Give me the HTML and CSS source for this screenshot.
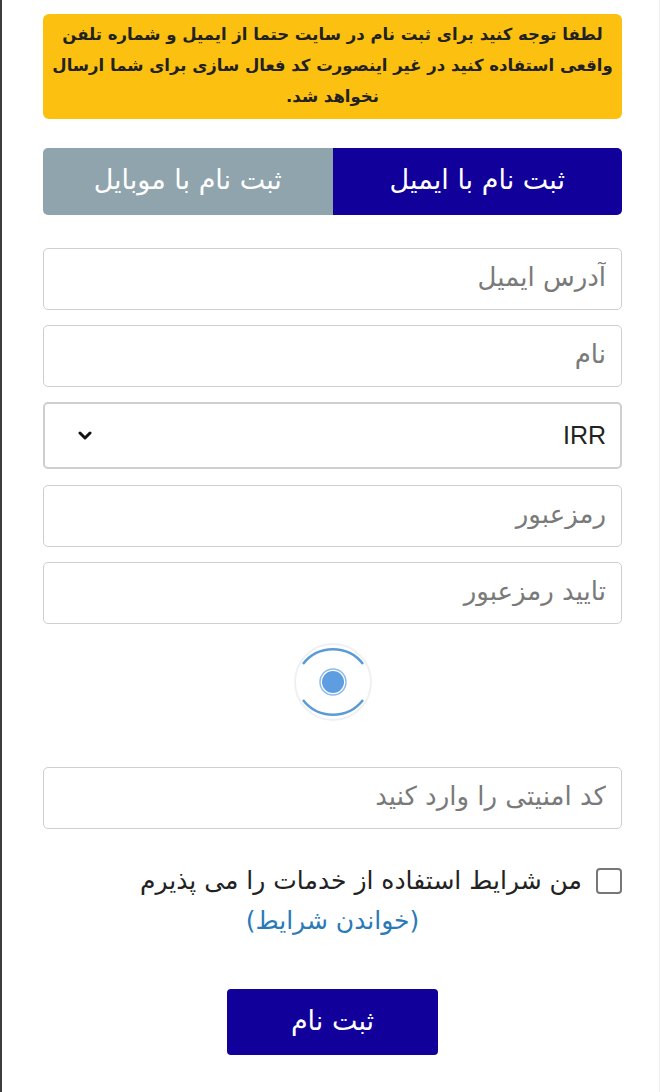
FILE: index.html
```
<!DOCTYPE html>
<html lang="fa" dir="rtl">
<head>
    <meta charset="UTF-8">
    <meta name="viewport" content="width=device-width, initial-scale=1.0">
    <title>ثبت نام</title>
    <link rel="stylesheet" href="styles.css">
</head>
<body>
    <div class="page">
        <div class="notice">
            <span>لطفا توجه کنید برای ثبت نام در سایت حتما از ایمیل و شماره تلفن</span><br>
            <span>واقعی استفاده کنید در غیر اینصورت کد فعال سازی برای شما ارسال</span><br>
            <span>نخواهد شد.</span>
        </div>

        <div class="tabs">
            <div class="tab active">ثبت نام با ایمیل</div>
            <div class="tab">ثبت نام با موبایل</div>
        </div>

        <form class="form">
            <input class="field" type="email" placeholder="آدرس ایمیل">
            <input class="field" type="text" placeholder="نام">
            <div class="field select">
                <span>IRR</span>
                <svg width="14" height="10" viewBox="0 0 14 10">
                    <path d="M2 2 L7 7 L12 2" fill="none" stroke="#111" stroke-width="3" stroke-linecap="round" stroke-linejoin="round"/>
                </svg>
            </div>
            <input class="field" type="password" placeholder="رمزعبور">
            <input class="field" type="password" placeholder="تایید رمزعبور">

            <div class="captcha">
                <svg width="84" height="84" viewBox="0 0 84 84">
                    <circle cx="42" cy="42" r="38" fill="none" stroke="#eef1f4" stroke-width="2"/>
                    <path d="M12 24 A38 38 0 0 1 72 24" fill="none" stroke="#5b9bd5" stroke-width="2.5"/>
                    <path d="M72 60 A38 38 0 0 1 12 60" fill="none" stroke="#5b9bd5" stroke-width="2.5"/>
                    <circle cx="42" cy="42" r="13" fill="none" stroke="#8fbbe8" stroke-width="1.5"/>
                    <circle cx="42" cy="42" r="11" fill="#5e9de0"/>
                </svg>
            </div>

            <input class="field" type="text" placeholder="کد امنیتی را وارد کنید">

            <div class="terms">
                <label class="check">
                    <span class="box"></span>
                    <span>من شرایط استفاده از خدمات را می پذیرم</span>
                </label>
                <a class="terms-link" href="#">(خواندن شرایط)</a>
            </div>

            <button type="button" class="submit">ثبت نام</button>
        </form>
    </div>
</body>
</html>
```

FILE: styles.css
```
body {
    margin: 0;
    background-color: #fff;
    font-family: "DejaVu Sans", "Noto Sans", sans-serif;
}

.page {
    min-height: 1092px;
    box-sizing: border-box;
    border-left: 2px solid #3d3d3d;
    border-right: 1px solid #f0f0f0;
    padding: 14px 37px 0 41px;
}

.notice {
    background-color: #fcc010;
    color: #222;
    font-weight: bold;
    font-size: 16.5px;
    line-height: 31px;
    text-align: center;
    white-space: nowrap;
    padding: 5px 4px 7px;
    border-radius: 6px;
}

.tabs {
    display: flex;
    margin-top: 29px;
    height: 67px;
    border-radius: 5px;
    overflow: hidden;
}

.tab {
    flex: 1;
    display: flex;
    align-items: center;
    justify-content: center;
    padding-bottom: 4px;
    background-color: #90a4ae;
    color: #fff;
    font-size: 27px;
}

.tab.active {
    background-color: #110099;
}

.form {
    display: flex;
    flex-direction: column;
    margin-top: 33px;
}

.field {
    box-sizing: border-box;
    height: 62px;
    margin-bottom: 15px;
    border: 1px solid #cfcfcf;
    border-radius: 5px;
    padding: 0 15px 4px;
    font-family: inherit;
    font-size: 26px;
    color: #222;
    background: #fff;
    direction: rtl;
}

.field::placeholder {
    color: #7a7a7a;
}

.select {
    display: flex;
    align-items: center;
    justify-content: space-between;
    height: 67px;
    border: 2px solid #cfcfcf;
    padding: 0 14px 0 33px;
    font-size: 25px;
    font-family: "Liberation Sans", sans-serif;
    margin-bottom: 16px;
}

.captcha {
    display: flex;
    justify-content: center;
    padding: 1px 0 43px;
}

.terms {
    display: flex;
    flex-direction: column;
    align-items: center;
    margin-top: 22px;
}

.check {
    display: flex;
    align-items: center;
    align-self: stretch;
    gap: 14px;
    font-size: 25px;
    color: #222;
}

.box {
    width: 22px;
    height: 22px;
    border: 2px solid #777;
    border-radius: 4px;
}

.terms-link {
    color: #2a7ab8;
    text-decoration: none;
    font-size: 25px;
    margin-top: 11px;
}

.submit {
    align-self: center;
    width: 211px;
    height: 66px;
    margin-top: 54px;
    padding-bottom: 4px;
    background-color: #110099;
    color: #fff;
    border: none;
    border-radius: 4px;
    font-family: inherit;
    font-size: 27px;
}
```
